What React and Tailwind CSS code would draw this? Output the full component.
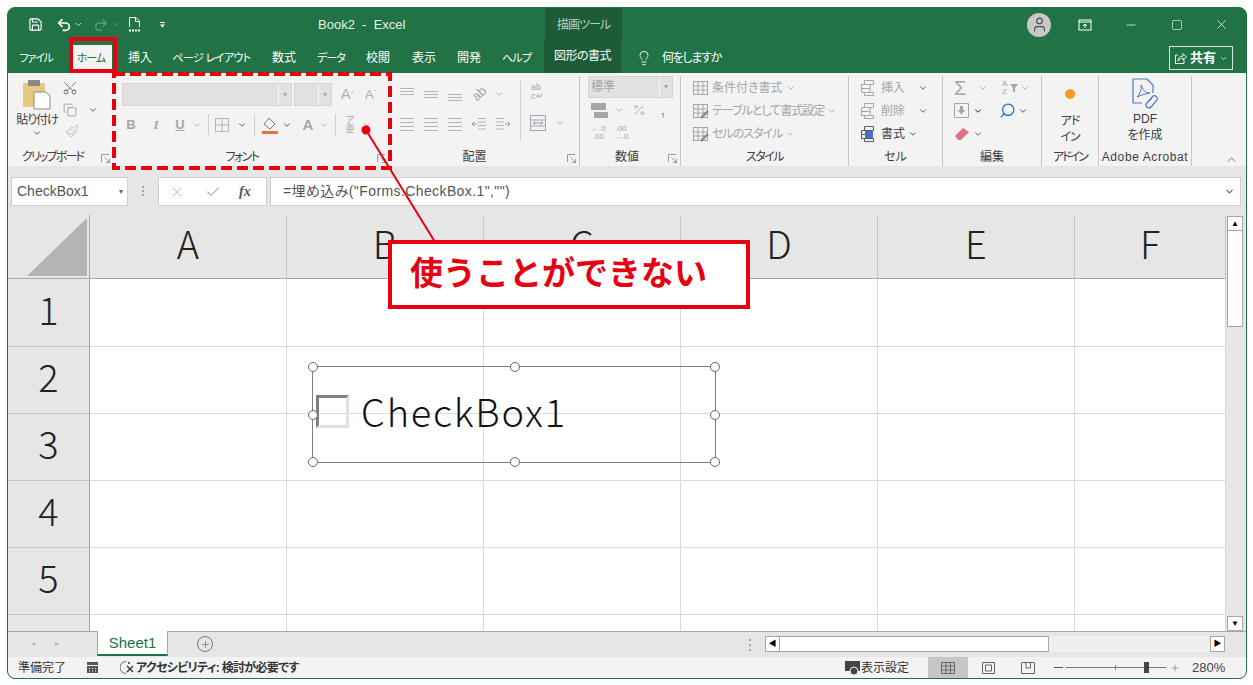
import { Save, Undo2, Redo2, ChevronDown, ChevronUp, Minus, Square, X, Lightbulb, Check, Scissors, Copy, Paintbrush, Search, Plus, User, Percent } from 'lucide-react'

const tabs = [
  ['ファイル', 'w-[34px] ml-[11px] text-[11px] tracking-[-1.2px]'],
  ['ホーム', 'w-[30px] ml-[23px] text-[11px] tracking-[-1px]'],
  ['挿入', 'w-[23px] ml-[22px]'],
  ['ページ レイアウト', 'w-[79px] ml-[21px] text-[11px] tracking-[-.6px]'],
  ['数式', 'w-[24px] ml-[21px]'],
  ['データ', 'w-[28px] ml-[21px] text-[11px] tracking-[-1px]'],
  ['校閲', 'w-[24px] ml-[21px]'],
  ['表示', 'w-[24px] ml-[22px]'],
  ['開発', 'w-[24px] ml-[21px]'],
  ['ヘルプ', 'w-[29px] ml-[21px] text-[11px] tracking-[-.8px]'],
]

const cols = ['A', 'B', 'C', 'D', 'E', 'F']
const rows = [1, 2, 3, 4, 5]

/* ---------------- small drawings ---------------- */
function Chev ({ className = 'text-[#a6a6a6]' }) {
  return <ChevronDown size={10} strokeWidth={2} className={className} />
}

function Lines ({ kind }) {
  const rowsOf = {
    top: [2, 5, 8],
    mid: [5, 8, 11],
    bot: [8, 11, 14],
    left: [2, 6, 10, 14],
  }
  return (
    <svg width="16" height="16" viewBox="0 0 16 16" stroke="#b5b5b5" strokeWidth="1">
      {rowsOf[kind].map(y => <path key={y} d={`M1 ${y + 0.5}H15`} />)}
    </svg>
  )
}

function Indent ({ flip }) {
  return (
    <svg width="16" height="14" viewBox="0 0 16 14" fill="none" stroke="#b5b5b5" className={flip ? '-scale-x-100' : ''}>
      <path d="M7 1.5H15M7 5H15M7 8.5H15M7 12H15" />
      <path d="M1 7H6M3.5 4.5L1 7L3.5 9.5" stroke="#7f9fc6" />
    </svg>
  )
}

function Paste () {
  return (
    <svg width="30" height="32" viewBox="0 0 30 32">
      <rect x="1" y="5" width="22" height="24" rx="1" fill="#eac77f" />
      <rect x="6" y="2" width="12" height="6" fill="#8a8a8a" />
      <path d="M12 14H24L28 18V31H12Z" fill="#fff" stroke="#8a8a8a" />
    </svg>
  )
}

function Sheetish ({ color = '#a6a6a6', kind }) {
  return (
    <svg width="18" height="18" viewBox="0 0 18 18" fill="none" stroke={color}>
      <rect x="1.5" y="2.5" width="14" height="13" />
      <path d="M1.5 7H15.5M1.5 11H15.5M6 2.5V15.5M11 2.5V15.5" />
      {kind === 'pen' && <path d="M9 16L16 9" stroke="#8f8f8f" strokeWidth="2.5" />}
    </svg>
  )
}

function Merge () {
  return (
    <svg width="18" height="18" viewBox="0 0 18 18" fill="none" stroke="#a6a6a6">
      <rect x="1.5" y="1.5" width="15" height="15" />
      <path d="M1.5 6H16.5M1.5 12H16.5" />
      <path d="M4 9H14M6 7.5L4 9L6 10.5M12 7.5L14 9L12 10.5" stroke="#7f9fc6" />
    </svg>
  )
}

function Cells ({ dark }) {
  const c = dark ? '#5a5a5a' : '#a6a6a6'
  return (
    <svg width="18" height="18" viewBox="0 0 18 18" fill="none" stroke={c}>
      <path d="M4.5 1.5H13.5V5.5H4.5ZM1.5 5.5H10V9.5H1.5ZM1.5 9.5H10V13.5H1.5ZM4.5 13.5H13.5V16.5H4.5Z" />
      {dark && <rect x="5" y="6" width="8" height="7" fill="#4472c4" stroke="none" />}
    </svg>
  )
}

function Acrobat () {
  return (
    <svg width="30" height="34" viewBox="0 0 30 34" fill="none" stroke="#4a78c8" strokeWidth="1.2">
      <path d="M3 3H17L23 9V17M3 3V27H12" />
      <path d="M7 21C10 18 12 13 11 9C13 14 15 17 20 17C15 18 11 19 7 21Z" strokeWidth="1" />
      <path d="M17 27L23 20A3 3 0 0 1 27 24L21 31A3 3 0 0 1 16 28L22 22" />
    </svg>
  )
}

function Group ({ w, label, labelClass = '', launcher, children, line = true }) {
  return (
    <section className={`${w} flex flex-col shrink-0 h-[90px] relative ${line ? 'border-r border-[#c6c6c6]' : ''}`}>
      <div className="flex-1 min-h-0">{children}</div>
      <div className={`h-[17px] text-[12px] leading-[17px] text-center text-[#404040] whitespace-nowrap ${labelClass}`}>{label}</div>
      {launcher && (
        <svg width="9" height="9" viewBox="0 0 9 9" fill="none" stroke="#9a9a9a" className="absolute right-[3px] bottom-[3px]">
          <path d="M.5 8V.5H8M8.5 8.5L3.5 3.5M8.5 5V8.5H5" />
        </svg>
      )}
    </section>
  )
}

function RowLabel ({ icon, children, chev, className = 'text-[#a6a6a6]', textClass = '' }) {
  return (
    <div className={`h-[23px] flex items-center gap-[3px] text-[12px] whitespace-nowrap ${className}`}>
      {icon}
      <span className={textClass}>{children}</span>
      {chev}
    </div>
  )
}

/* ---------------- sections ---------------- */
function TitleBar () {
  return (
    <div className="h-[33px] flex items-center text-white relative shrink-0">
      <Save size={15} strokeWidth={1.8} className="ml-[20px]" />
      <Undo2 size={16} strokeWidth={2.6} className="ml-[13px]" />
      <ChevronDown size={9} strokeWidth={2} className="ml-[2px]" />
      <Redo2 size={16} strokeWidth={2} className="ml-[10px] text-[#5f9a78]" />
      <ChevronDown size={9} strokeWidth={2} className="ml-[2px] text-[#5f9a78]" />
      <svg width="15" height="17" viewBox="0 0 15 17" fill="none" stroke="white" className="ml-[7px]">
        <path d="M2.5 11V1.5H9L12.5 5V11M8.5 1.5V5.5H12.5" />
        <path d="M2 14.5H13" strokeWidth="2" strokeDasharray="2 1" />
      </svg>
      <svg width="7" height="7" viewBox="0 0 7 7" fill="white" className="ml-[17px]">
        <path d="M1 1H6V2H1ZM1 3.5H6L3.5 6.5Z" />
      </svg>
      <span className="ml-[152px] w-[90px] text-[13px] text-[#e7efe9] whitespace-pre">Book2  -  Excel</span>
      <div className="ml-[137px] w-[77px] h-[33px] bg-[#1e5c38] text-[12px] tracking-[-1px] text-[#b9d0c2] flex items-center justify-center">描画ツール</div>
      <div className="ml-[405px] w-[24px] h-[24px] rounded-full bg-[#c8c8c8] flex items-center justify-center">
        <User size={17} strokeWidth={1.6} className="text-[#4a4a4a]" />
      </div>
      <svg width="14" height="12" viewBox="0 0 14 12" fill="none" stroke="white" className="ml-[27px]">
        <rect x="1" y="1" width="12" height="10" />
        <path d="M1 3H13M7 9V5M5 7L7 5L9 7" />
      </svg>
      <Minus size={14} strokeWidth={1.2} className="ml-[32px]" />
      <Square size={12} strokeWidth={1.2} className="ml-[33px] rounded-sm" />
      <X size={15} strokeWidth={1.2} className="ml-[31px]" />
    </div>
  )
}

function TabBar () {
  return (
    <div className="h-[32px] flex items-end text-white text-[12px] shrink-0">
      {tabs.map(([name, cls]) => (
        <div
          key={name}
          className={`${cls} h-[28px] leading-[27px] text-center whitespace-nowrap relative ${name === 'ホーム' ? 'text-[#217346]' : ''}`}
        >
          {name === 'ホーム' && <span className="absolute -left-[6px] -right-[6px] inset-y-0 bg-[#f3f3f3]" />}
          <span className="relative">{name}</span>
        </div>
      ))}
      <div className="ml-[13px] w-[77px] h-[32px] bg-[#1e5c38] leading-[31px] text-center tracking-[-.5px]">図形の書式</div>
      <Lightbulb size={16} strokeWidth={1.3} className="ml-[15px] mb-[7px]" />
      <span className="ml-[10px] h-[28px] leading-[27px] tracking-[-1.3px]">何をしますか</span>
      <div className="ml-auto mr-[13px] mb-[3px] w-[64px] h-[24px] border border-[#d5e3da] flex items-center justify-center gap-[3px]">
        <svg width="13" height="13" viewBox="0 0 13 13" fill="none" stroke="white">
          <path d="M4 3H1.5V11.5H10V8M4 9C4 5.5 6.5 4 9 4V1.5L12.5 5L9 8V6C7 6 5.5 7 4 9Z" strokeWidth=".9" />
        </svg>
        <span className="font-bold text-[13px]">共有</span>
        <ChevronDown size={9} strokeWidth={2} />
      </div>
    </div>
  )
}

function Ribbon () {
  return (
    <div className="h-[93px] bg-[#f3f3f3] flex items-start pt-[3px] shrink-0">
      <Group w="w-[105px]" label="クリップボード" labelClass="tracking-[-1.8px] pr-[16px]" line={false} launcher>
        <div className="flex">
          <div className="w-[44px] ml-[7px] flex flex-col items-center mt-[2px]">
            <Paste />
            <span className="text-[12px] leading-[15px] mt-[3px] text-[#404040] whitespace-nowrap tracking-[-1px]">貼り付け</span>
            <Chev className="text-[#404040]" />
          </div>
          <div className="flex flex-col items-start -ml-[1px] mt-[4px]">
            <Scissors size={16} strokeWidth={1.2} className="text-[#555] -rotate-90 ml-[4px]" />
            <div className="flex items-center gap-[11px] mt-[7px] ml-[5px]">
              <Copy size={14} strokeWidth={1.1} className="text-[#7a7a7a]" />
              <Chev className="text-[#404040]" />
            </div>
            <Paintbrush size={14} strokeWidth={1.2} className="text-[#b5b5b5] ml-[7px] mt-[7px]" />
          </div>
        </div>
      </Group>

      <Group w="w-[272px] ml-[4px]" label="フォント" labelClass="tracking-[-1.5px] pr-[22px]" line={false} launcher>
        <div className="flex items-center gap-[2px] ml-[5px] mt-[7px] h-[23px]">
          <div className="w-[170px] h-[23px] bg-[#e1e1e1] border border-[#d5d5d5] flex justify-end">
            <span className="w-[13px] border-l border-[#f3f3f3] flex items-center justify-center text-[8px] text-[#aaa]">▾</span>
          </div>
          <div className="w-[38px] h-[23px] bg-[#e1e1e1] border border-[#d5d5d5] flex justify-end">
            <span className="w-[13px] border-l border-[#f3f3f3] flex items-center justify-center text-[8px] text-[#aaa]">▾</span>
          </div>
          <span className="ml-[6px] w-[15px] text-center text-[15px] text-[#b0b0b0]">A<sup className="text-[7px]">^</sup></span>
          <span className="ml-[6px] w-[15px] text-center text-[13px] text-[#b0b0b0]">A<sup className="text-[7px]">ˇ</sup></span>
        </div>
        <div className="flex items-center h-[24px] mt-[7px] ml-[7px] text-[#a6a6a6]">
          <b className="w-[14px] text-[13px] text-center">B</b>
          <i className="w-[14px] ml-[11px] text-[13px] text-center font-['Liberation_Serif'] font-bold">I</i>
          <u className="w-[14px] ml-[10px] text-[13px] text-center font-bold">U</u>
          <Chev className="ml-[5px]" />
          <span className="w-px h-[22px] bg-[#d0d0d0] ml-[6px]" />
          <svg width="14" height="14" viewBox="0 0 14 14" fill="none" stroke="#b5b5b5" className="ml-[6px]">
            <path d="M.5.5H13.5V13.5H.5ZM7 .5V13.5M.5 7H13.5" />
          </svg>
          <ChevronDown size={10} strokeWidth={2} className="ml-[8px] text-[#404040]" />
          <span className="w-px h-[22px] bg-[#d0d0d0] ml-[7px]" />
          <svg width="18" height="18" viewBox="0 0 18 18" className="ml-[6px]">
            <path d="M8 2L14 8L9 13L3 8Z" fill="#f3f3f3" stroke="#777" />
            <path d="M1 15H17V18H1Z" fill="#e97132" />
          </svg>
          <ChevronDown size={10} strokeWidth={2} className="ml-[3px] text-[#404040]" />
          <span className="ml-[10px] w-[12px] text-center text-[15px] font-bold">A</span>
          <Chev className="ml-[5px]" />
          <span className="w-px h-[22px] bg-[#d0d0d0] ml-[6px]" />
          <span className="w-[12px] ml-[8px] text-[9px] leading-[9px] text-center">ア<br />亜</span>
          <Chev className="ml-[6px]" />
        </div>
      </Group>

      <Group w="w-[188px] ml-[3px]" label="配置" labelClass="pr-[22px]" launcher>
        <div className="flex">
          <div className="w-[121px] ml-[7px]">
            <div className="flex items-center gap-[8px] h-[24px] mt-[6px]">
              <Lines kind="top" /><Lines kind="mid" /><Lines kind="bot" />
              <span className="text-[#a6a6a6] text-[13px] ml-[1px] -rotate-45">ab</span>
              <Chev />
            </div>
            <div className="flex items-center gap-[8px] h-[24px] mt-[6px]">
              <Lines kind="left" /><Lines kind="left" /><Lines kind="left" />
              <Indent /><Indent flip />
            </div>
          </div>
          <span className="w-px h-[60px] bg-[#d0d0d0] mt-[5px]" />
          <div className="ml-[8px] mt-[7px]">
            <div className="text-[9px] leading-[9px] text-[#a6a6a6] pl-[2px]">ab<br />c↵</div>
            <div className="flex items-center mt-[13px] gap-[8px]">
              <Merge />
              <Chev />
            </div>
          </div>
        </div>
      </Group>

      <Group w="w-[101px]" label="数値" labelClass="pr-[6px]" launcher>
        <div className="ml-[8px] w-[85px] h-[22px] bg-[#e1e1e1] border border-[#d5d5d5] flex justify-between text-[12px] text-[#a6a6a6] leading-[20px] pl-[2px]">
          標準
          <span className="w-[13px] border-l border-[#f3f3f3] text-[8px] text-center">▾</span>
        </div>
        <div className="flex items-center h-[24px] ml-[11px] text-[#a6a6a6]">
          <svg width="17" height="15" viewBox="0 0 17 15" fill="#a6a6a6"><path d="M0 0H15V7H0ZM3 9H17V15H3Z" /></svg>
          <Chev className="ml-[6px]" />
          <Percent size={14} strokeWidth={1.4} className="ml-[8px]" />
          <b className="ml-[15px] text-[14px] leading-[14px]">,</b>
        </div>
        <div className="flex ml-[11px] mt-[3px] gap-[8px] text-[8px] leading-[8px] text-[#a6a6a6] text-center">
          <span>←.0<br />.00</span>
          <span>.00<br />→.0</span>
        </div>
      </Group>

      <Group w="w-[168px]" label="スタイル" labelClass="tracking-[-1.5px]">
        <div className="ml-[11px]">
          <RowLabel icon={<Sheetish />} chev={<Chev />} textClass="-ml-px">条件付き書式</RowLabel>
          <RowLabel icon={<Sheetish kind="pen" />} chev={<Chev />} textClass="-ml-px tracking-[-1px]">テーブルとして書式設定</RowLabel>
          <RowLabel icon={<Sheetish kind="pen" />} chev={<Chev />} textClass="-ml-px tracking-[-1px]">セルのスタイル</RowLabel>
        </div>
      </Group>

      <Group w="w-[94px]" label="セル">
        <div className="ml-[11px]">
          <RowLabel icon={<Cells />} chev={<ChevronDown size={10} strokeWidth={2} className="ml-[10px] text-[#404040]" />}>挿入</RowLabel>
          <RowLabel icon={<Cells />} chev={<ChevronDown size={10} strokeWidth={2} className="ml-[10px] text-[#404040]" />}>削除</RowLabel>
          <RowLabel className="text-[#404040]" icon={<Cells dark />} chev={<ChevronDown size={10} strokeWidth={2} className="text-[#404040]" />}>書式</RowLabel>
        </div>
      </Group>

      <Group w="w-[99px]" label="編集">
        <div className="ml-[11px]">
          <div className="h-[23px] flex items-center">
            <span className="w-[16px] text-[20px] leading-[20px] text-[#a6a6a6]">Σ</span>
            <Chev className="ml-[8px] text-[#a6a6a6]" />
            <span className="ml-[14px] w-[8px] text-[8px] leading-[8px] text-[#a6a6a6]">A<br />Z</span>
            <svg width="8" height="8" viewBox="0 0 8 8" fill="#a6a6a6" className="mr-[2px]"><path d="M0 0H8L5 4V8H3V4Z" /></svg>
            <Chev />
          </div>
          <div className="h-[23px] flex items-center">
            <svg width="15" height="15" viewBox="0 0 15 15" fill="#a6a6a6" stroke="#a6a6a6">
              <path d="M.5.5H14.5V14.5H.5Z" fill="none" />
              <path d="M6 3H9V7H11.5L7.5 11.5L3.5 7H6Z" stroke="none" />
            </svg>
            <Chev className="ml-[4px]" />
            <Search size={17} strokeWidth={1.8} className="ml-[16px] text-[#2b6cb8] -scale-x-100" />
            <ChevronDown size={10} strokeWidth={2} className="ml-[2px] text-[#404040]" />
          </div>
          <div className="h-[23px] flex items-center">
            <svg width="16" height="14" viewBox="0 0 16 14" fill="#e0708a"><path d="M1 9L9 1L15 5L7 13H4Z" /></svg>
            <ChevronDown size={10} strokeWidth={2} className="ml-[3px] text-[#404040]" />
          </div>
        </div>
      </Group>

      <Group w="w-[57px]" label="アドイン" labelClass="tracking-[-2px]">
        <div className="flex flex-col items-center">
          <span className="w-[10px] h-[10px] rounded-full bg-[#f79a1f] mt-[13px]" />
          <span className="text-[12px] leading-[16px] mt-[14px] text-center text-[#404040] tracking-[-1px]">アド<br />イン</span>
        </div>
      </Group>

      <Group w="w-[93px]" label="Adobe Acrobat" labelClass="tracking-[.6px]">
        <div className="flex flex-col items-center">
          <Acrobat />
          <span className="text-[12px] leading-[16px] mt-[1px] text-center text-[#404040]">PDF<br />を作成</span>
        </div>
      </Group>

      <ChevronUp size={13} strokeWidth={1.4} className="ml-[33px] mt-[77px] text-[#555]" />
    </div>
  )
}

function FormulaBar () {
  return (
    <div className="h-[49px] bg-[#e6e6e6] pt-[11px] pb-[9px] flex shrink-0 text-[14px]">
      <div className="ml-[3px] w-[117px] bg-white border border-[#d0d0d0] flex items-center justify-between pl-[5px] pr-[4px] text-[#555]">
        CheckBox1
        <span className="text-[8px] text-[#666]">▾</span>
      </div>
      <div className="w-[30px] flex items-center justify-center">
        <svg width="3" height="11" fill="#a6a6a6"><rect y="0" width="2" height="2" /><rect y="4" width="2" height="2" /><rect y="8" width="2" height="2" /></svg>
      </div>
      <div className="w-[109px] bg-white border border-[#d0d0d0] flex items-center">
        <X size={16} strokeWidth={1.3} className="ml-[10px] text-[#b5b5b5]" />
        <Check size={16} strokeWidth={1.8} className="ml-[20px] text-[#b5b5b5]" />
        <i className="ml-[18px] font-['Liberation_Serif'] font-bold text-[#555]">fx</i>
      </div>
      <div className="ml-[3px] mr-[5px] flex-1 bg-white border border-[#d0d0d0] flex items-center justify-between pl-[12px] pr-[5px] text-[#555] tracking-[.4px]">
        =埋め込み(&quot;Forms.CheckBox.1&quot;,&quot;&quot;)
        <ChevronDown size={11} strokeWidth={2.4} className="text-[#666]" />
      </div>
    </div>
  )
}

function CheckBoxShape () {
  const handles = [
    'left-[-5px] top-[-5px]', 'left-[197px] top-[-5px]', 'right-[-5px] top-[-5px]',
    'left-[-5px] top-[43px]', 'right-[-5px] top-[43px]',
    'left-[-5px] bottom-[-5px]', 'left-[197px] bottom-[-5px]', 'right-[-5px] bottom-[-5px]',
  ]
  return (
    <div className="absolute left-[304px] top-[151px] w-[404px] h-[97px] border border-[#808080] flex items-center">
      <span className="ml-[3px] mb-[6px] w-[33px] h-[33px] border-[3px] border-[#e0e0e0] border-t-[#808080] border-l-[#808080]" />
      <span className="ml-[12px] mb-[8px] text-[38px] leading-[44px] text-[#111] font-['Noto_Sans_CJK_JP'] tracking-[1.8px] font-light">CheckBox1</span>
      {handles.map(h => (
        <span key={h} className={`absolute ${h} w-[10px] h-[10px] rounded-full bg-white border-[1.5px] border-[#666]`} />
      ))}
    </div>
  )
}

function Grid () {
  return (
    <div className="flex-1 min-h-0 flex relative bg-white overflow-hidden">
      <div className="flex-1 grid grid-cols-[82px_197px_197px_197px_197px_197px_1fr] grid-rows-[64px_68px_67px_67px_67px_67px_1fr]">
        <div className="bg-[#e6e6e6] border-r border-b border-[#a8a8a8] flex items-end justify-end pr-[2px] pb-[2px]">
          <svg width="60" height="58" viewBox="0 0 60 58" fill="#b4b4b4"><path d="M60 0V58H0Z" /></svg>
        </div>
        {cols.map(c => (
          <div key={c} className="bg-[#e6e6e6] border-r border-b border-b-[#a8a8a8] border-r-[#c6c6c6] flex items-center justify-center pb-[8px] text-[38px] text-[#222] font-['Noto_Sans_CJK_JP'] font-light">{c}</div>
        ))}
        {[...rows, 6].map(r => (
          <div key={r} className="contents">
            <div className={`bg-[#e6e6e6] border-r border-r-[#a8a8a8] border-b border-b-[#c6c6c6] flex items-center justify-center pb-[9px] text-[38px] text-[#222] font-['Noto_Sans_CJK_JP'] font-light ${r === 6 ? 'border-b-0' : ''}`}>{r === 6 ? '' : r}</div>
            {cols.map(c => <div key={c} className={`border-r border-b border-[#d9d9d9] ${r === 6 ? 'border-b-0' : ''}`} />)}
          </div>
        ))}
      </div>
      <div className="w-[20px] bg-[#e6e6e6] flex flex-col items-start pl-px pt-[1px]">
        <div className="w-[16px] h-[15px] bg-white border border-[#a6a6a6] flex items-center justify-center text-[8px]">▲</div>
        <div className="w-[16px] h-[96px] bg-white border-x border-b border-[#a6a6a6]" />
        <div className="flex-1" />
        <div className="w-[16px] h-[15px] bg-white border border-[#a6a6a6] flex items-center justify-center text-[8px]">▼</div>
      </div>
      <CheckBoxShape />
    </div>
  )
}

function SheetBar () {
  return (
    <div className="h-[26px] bg-[#e6e6e6] border-t border-[#a8a8a8] flex shrink-0">
      <span className="ml-[23px] mt-[7px] text-[8px] text-[#bbb] leading-[10px]">◂</span>
      <span className="ml-[20px] mt-[7px] text-[8px] text-[#bbb] leading-[10px]">▸</span>
      <div className="ml-[38px] -mt-px w-[71px] h-[25px] bg-white border-x border-[#a8a8a8] border-b-2 border-b-[#217346] text-[#217346] text-[15px] leading-[24px] text-center">Sheet1</div>
      <div className="ml-[29px] mt-[4px] w-[16px] h-[16px] rounded-full border border-[#777] flex items-center justify-center">
        <Plus size={11} strokeWidth={1.3} className="text-[#555]" />
      </div>
      <svg width="3" height="12" fill="#a6a6a6" className="ml-[536px] mt-[7px]"><rect y="0" width="2" height="2" /><rect y="5" width="2" height="2" /><rect y="10" width="2" height="2" /></svg>
      <div className="ml-[13px] mt-[4px] w-[460px] h-[16px] flex">
        <div className="w-[15px] h-[16px] bg-white border border-[#a6a6a6] text-[8px] leading-[14px] text-center">◀</div>
        <div className="w-[269px] h-[16px] bg-white border-y border-r border-[#a6a6a6]" />
        <div className="flex-1 bg-[#efefef]" />
        <div className="w-[15px] h-[16px] bg-white border border-[#a6a6a6] text-[8px] leading-[14px] text-center">▶</div>
      </div>
    </div>
  )
}

function StatusBar () {
  return (
    <div className="h-[21px] bg-[#f3f3f3] flex items-center text-[12px] text-[#333] shrink-0">
      <span className="ml-[10px]">準備完了</span>
      <svg width="13" height="13" viewBox="0 0 13 13" className="ml-[20px]" fill="#555">
        <path d="M1 1H12V4H1ZM1 5H12V12H1Z" />
        <path d="M3 7H4V8H3ZM6 7H7V8H6ZM9 7H10V8H9ZM3 9.5H4V10.5H3ZM6 9.5H7V10.5H6ZM9 9.5H10V10.5H9Z" fill="#f3f3f3" />
      </svg>
      <svg width="15" height="15" viewBox="0 0 15 15" fill="none" stroke="#666" className="ml-[21px]">
        <path d="M6 1.5A6 6 0 0 0 6 13.5" />
        <path d="M7 6L13 12M13 6L7 12" stroke="#333" strokeWidth="1.4" />
        <circle cx="9" cy="3" r="1" fill="#333" stroke="none" />
      </svg>
      <span className="ml-[1px] font-bold w-[163px] whitespace-nowrap tracking-[-.7px]">アクセシビリティ: 検討が必要です</span>
      <svg width="17" height="16" viewBox="0 0 17 16" className="ml-[545px]">
        <path d="M1 1H16V11H1Z" fill="#444" />
        <circle cx="10" cy="11" r="4" fill="#444" stroke="#f3f3f3" />
      </svg>
      <span className="w-[48px] whitespace-nowrap">表示設定</span>
      <div className="ml-[19px] w-[40px] h-[21px] bg-[#c6c6c6] flex items-center justify-center">
        <svg width="14" height="12" viewBox="0 0 14 12" fill="none" stroke="#666">
          <path d="M.5.5H13.5V11.5H.5ZM.5 4H13.5M.5 8H13.5M5 .5V11.5M9.5 .5V11.5" />
        </svg>
      </div>
      <svg width="13" height="12" viewBox="0 0 13 12" fill="none" stroke="#666" className="ml-[14px]">
        <path d="M.5.5H12.5V11.5H.5ZM3.5 3H9.5V9H3.5Z" />
      </svg>
      <svg width="14" height="12" viewBox="0 0 14 12" fill="none" stroke="#666" className="ml-[26px]">
        <path d="M.5 1V11.5H13.5V1M.5.5H13.5M5 .5V6H9.5V.5" />
      </svg>
      <span className="ml-[19px] w-[9px] h-px bg-[#555]" />
      <div className="ml-[3px] w-[100px] h-[11px] flex items-center relative">
        <span className="w-full h-px bg-[#777]" />
        <span className="absolute left-[49px] w-px h-[5px] bg-[#777]" />
        <span className="absolute left-[78px] w-[5px] h-[11px] bg-[#444]" />
      </div>
      <Plus size={10} strokeWidth={1.2} className="ml-[4px] text-[#555]" />
      <span className="ml-[12px] text-[13px] text-[#444]">280%</span>
    </div>
  )
}

export default function App () {
  return (
    <div className="w-[1253px] h-[685px] bg-white relative overflow-hidden font-['Liberation_Sans','Noto_Sans_CJK_JP',sans-serif] [font-feature-settings:'palt'] pl-[7px] pr-[6px] pt-[7px] pb-[6px]">
      <div className="h-full rounded-[8px] overflow-hidden border border-[#217346] bg-[#217346] flex flex-col">
        <TitleBar />
        <TabBar />
        <Ribbon />
        <FormulaBar />
        <Grid />
        <SheetBar />
        <StatusBar />
      </div>

      {/* red annotations on top of the screenshot */}
      <div className="absolute left-[69px] top-[37px] w-[48px] h-[36px] border-[4px] border-[#e60012]" />
      <svg width="284" height="102" viewBox="0 0 284 102" fill="none" className="absolute left-[110px] top-[70px]">
        <rect x="4" y="4" width="276" height="94" stroke="#e60012" strokeWidth="4" strokeDasharray="11 5" />
      </svg>
      <svg width="90" height="125" viewBox="0 0 90 125" className="absolute left-[355px] top-[120px]">
        <circle cx="11" cy="10" r="4.5" fill="#e60012" />
        <path d="M11 10L80 122" stroke="#e60012" strokeWidth="2" />
      </svg>
      <div className="absolute left-[388px] top-[240px] w-[362px] h-[69px] bg-white border-[4px] border-[#e60012] flex items-center pl-[18px] pb-[6px] text-[33px] font-bold text-[#e60012] font-['Noto_Sans_CJK_JP'] [font-feature-settings:normal] whitespace-nowrap">
        使うことができない
      </div>
    </div>
  )
}
